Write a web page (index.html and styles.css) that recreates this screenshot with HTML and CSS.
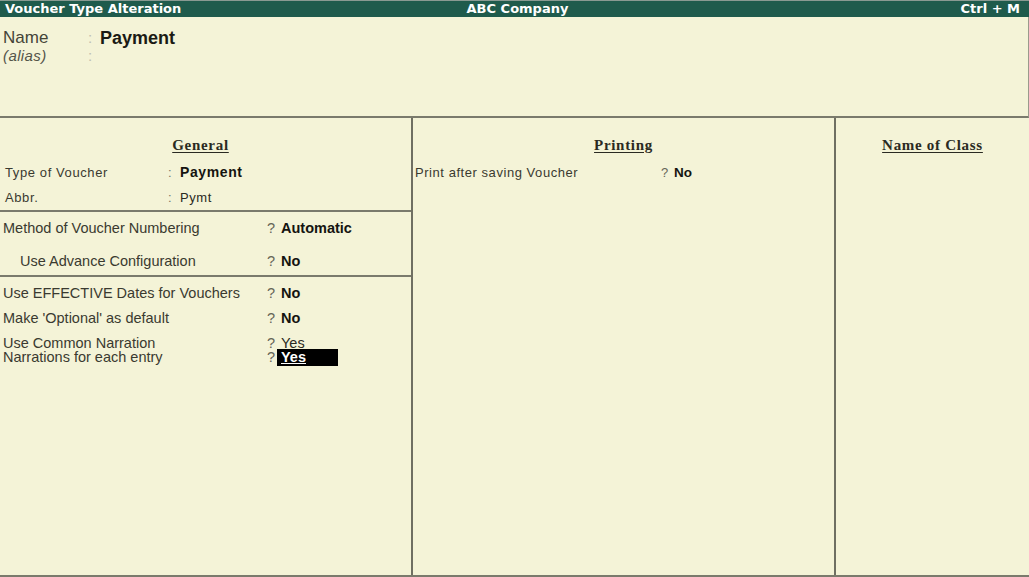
FILE: index.html
```html
<!DOCTYPE html>
<html>
<head>
<meta charset="utf-8">
<link rel="stylesheet" href="styles.css">
</head>
<body>
<div class="screen">
  <div class="titlebar">
    <span class="t-left">Voucher Type Alteration</span>
    <span class="t-mid">ABC Company</span>
    <span class="t-right">Ctrl + M</span>
  </div>
  <div class="toppanel">
    <div class="nrow">
      <span class="nlabel">Name</span><span class="ncolon">:</span><span class="nvalue">Payment</span>
    </div>
    <div class="arow">
      <span class="alabel">(alias)</span><span class="ncolon">:</span>
    </div>
  </div>
  <div class="main">
    <div class="col col-left">
      <div class="sec sec-general">
        <div class="heading"><span>General</span></div>
        <div class="grow">
          <span class="glabel">Type of Voucher</span><span class="gcolon">:</span><span class="gvalue bold">Payment</span>
        </div>
        <div class="grow">
          <span class="glabel">Abbr.</span><span class="gcolon">:</span><span class="gvalue">Pymt</span>
        </div>
      </div>
      <div class="sec sec-numbering">
        <div class="mrow">
          <span class="mlabel">Method of Voucher Numbering</span><span class="q">?</span><span class="bold">Automatic</span>
        </div>
        <div class="mrow">
          <span class="mlabel indent">Use Advance Configuration</span><span class="q">?</span><span class="bold">No</span>
        </div>
      </div>
      <div class="sec sec-options">
        <div class="orow">
          <span class="mlabel">Use EFFECTIVE Dates for Vouchers</span><span class="q">?</span><span class="bold">No</span>
        </div>
        <div class="orow">
          <span class="mlabel">Make 'Optional' as default</span><span class="q">?</span><span class="bold">No</span>
        </div>
        <div class="orow tight">
          <span class="mlabel">Use Common Narration</span><span class="q">?</span><span>Yes</span>
        </div>
        <div class="orow">
          <span class="mlabel">Narrations for each entry</span><span class="q">?</span><span class="cursor">Yes</span>
        </div>
      </div>
    </div>
    <div class="col col-mid">
      <div class="heading"><span>Printing</span></div>
      <div class="prow">
        <span class="plabel">Print after saving Voucher</span><span class="pq">?</span><span class="bold pval">No</span>
      </div>
    </div>
    <div class="col col-right">
      <div class="heading"><span>Name of Class</span></div>
    </div>
  </div>
</div>
</body>
</html>
```

FILE: styles.css
```css
* { box-sizing: border-box; }

html, body {
  margin: 0;
  padding: 0;
}

body {
  width: 1029px;
  height: 577px;
  overflow: hidden;
  background: #f4f3d7;
  color: #2a2a22;
  font-family: "Liberation Sans", Arial, sans-serif;
}

.screen {
  display: flex;
  flex-direction: column;
  height: 577px;
}

/* Title bar */
.titlebar {
  height: 17px;
  background: #1f5b4c;
  border-top: 1px solid #8a9a92;
  color: #ffffff;
  font-family: "DejaVu Sans", sans-serif;
  font-weight: bold;
  font-size: 13px;
  line-height: 16px;
  display: grid;
  grid-template-columns: 1fr auto 1fr;
  padding: 0 9px 0 5px;
  white-space: nowrap;
}
.t-mid { padding-left: 10px; }
.t-right { text-align: right; }

/* Name panel */
.toppanel {
  height: 101px;
  border-bottom: 2px solid #7a7a6c;
  border-right: 1px solid #9a9a8c;
  padding: 10px 0 0 3px;
}
.nrow {
  height: 20px;
  line-height: 22px;
  display: flex;
  white-space: nowrap;
}
.nlabel {
  width: 85px;
  font-size: 17px;
  color: #444438;
}
.ncolon {
  width: 12px;
  color: #c0c0b0;
  font-size: 15px;
}
.nvalue {
  font-size: 18px;
  font-weight: bold;
  color: #1a1a14;
}
.arow {
  height: 18px;
  line-height: 18px;
  display: flex;
  white-space: nowrap;
}
.alabel {
  width: 85px;
  font-size: 15px;
  font-style: italic;
  letter-spacing: 0.4px;
  color: #55554a;
}

/* Main area */
.main {
  flex: 1;
  display: grid;
  grid-template-columns: 413px 423px 1fr;
  border-bottom: 2px solid #7a7a6c;
}
.col {
  min-width: 0;
}
.col-left, .col-mid {
  border-right: 2px solid #6f6f62;
}
.col-left {
  display: flex;
  flex-direction: column;
}

.heading {
  text-align: center;
  font-family: "Liberation Serif", "Times New Roman", serif;
  font-weight: bold;
  font-size: 15px;
  letter-spacing: 0.7px;
  line-height: 16px;
  height: 16px;
  margin-top: 19px;
  color: #2a2a22;
}
.heading span {
  text-decoration: underline;
  text-underline-offset: 2px;
}

.sec {
  border-bottom: 2px solid #7a7a6c;
}
.sec-general {
  height: 94px;
}
.sec-general .heading {
  padding-right: 10px;
}
.sec-numbering {
  height: 65px;
}
.sec-options {
  flex: 1;
  border-bottom: none;
  padding-top: 4px;
}

.bold {
  font-weight: bold;
  color: #141410;
}

/* General rows */
.grow {
  display: flex;
  height: 25px;
  line-height: 25px;
  font-size: 13px;
  letter-spacing: 0.6px;
  white-space: nowrap;
  padding-left: 5px;
}
.grow:first-of-type { }
.sec-general .heading + .grow { margin-top: 7px; }
.glabel {
  width: 163px;
  color: #3a3a30;
}
.gcolon {
  width: 12px;
  color: #77776a;
}
.gvalue.bold {
  font-size: 14px;
}

/* Numbering / option rows */
.mrow, .orow {
  display: flex;
  font-size: 14.5px;
  white-space: nowrap;
  padding-left: 3px;
}
.mrow {
  height: 33px;
  line-height: 33px;
}
.orow {
  height: 25px;
  line-height: 25px;
}
.orow.tight {
  height: 14px;
}
.mlabel {
  width: 264px;
  color: #3a3a30;
}
.mlabel.indent {
  padding-left: 17px;
}
.q {
  width: 14px;
  color: #666658;
}
.cursor {
  display: inline-block;
  align-self: center;
  height: 17px;
  line-height: 17px;
  width: 61px;
  margin-left: -4px;
  padding-left: 4px;
  background: #000000;
  color: #ffffff;
  font-weight: bold;
  text-decoration: underline;
}

/* Printing */
.prow {
  display: flex;
  height: 25px;
  line-height: 25px;
  margin-top: 7px;
  font-size: 13px;
  white-space: nowrap;
  padding-left: 2px;
}
.plabel {
  width: 246px;
  letter-spacing: 0.55px;
  color: #3a3a30;
}
.pq {
  width: 13px;
  color: #666658;
}
.pval {
  font-size: 13.5px;
}
```
